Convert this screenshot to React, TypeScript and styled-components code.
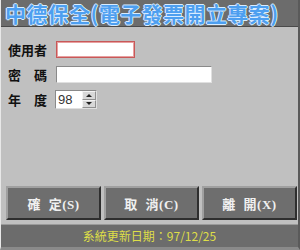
import styled, { createGlobalStyle } from "styled-components";

const GlobalStyle = createGlobalStyle`
  html, body {
    margin: 0;
    padding: 0;
    background: #c0c0c0;
  }
`;

const Frame = styled.div`
  display: flex;
  flex-direction: column;

  width: 300px;
  height: 250px;
  box-sizing: border-box;

  background: #c0c0c0;
  border-left: 1px solid #e8e8e8;
  border-right: 2px solid #5a5a5a;
  border-bottom: 3px solid #8a8a8a;

  font-family: "Liberation Serif", "Noto Sans CJK TC", serif;
  overflow: hidden;
`;

const TitleBar = styled.div`
  display: flex;
  align-items: center;

  height: 27px;
  box-sizing: border-box;
  padding-left: 4px;

  background: #6c6c6c;
  border-bottom: 1px solid #4a4a4a;
`;

const Title = styled.h1`
  margin: 0;

  font-family: "Noto Sans CJK TC", sans-serif;
  font-size: 21px;
  font-weight: 700;
  line-height: 1;
  letter-spacing: 0.4px;
  white-space: nowrap;

  color: #4d9ff0;
  text-shadow:
    1px 0 0 #d8ecff,
    -1px 0 0 #d8ecff,
    0 1px 0 #d8ecff,
    0 -1px 0 #d8ecff;
`;

const Form = styled.div`
  display: flex;
  flex-direction: column;

  gap: 8px;
  padding: 14px 0 0 7px;
`;

const Row = styled.div`
  display: flex;
  align-items: center;

  gap: 9px;
  height: 17px;
`;

const Label = styled.label`
  display: flex;
  justify-content: space-between;

  width: 39px;

  font-family: "Noto Sans CJK TC", sans-serif;
  font-size: 13px;
  font-weight: 700;
  color: #111;
`;

const Input = styled.input<{ $width: number; $focus?: boolean }>`
  width: ${(p) => p.$width}px;
  height: 17px;
  box-sizing: border-box;
  padding: 0 2px;

  background: #ffffff;
  border: 1px solid ${(p) => (p.$focus ? "#c85858" : "#8a8a8a")};
  border-right-color: ${(p) => (p.$focus ? "#c85858" : "#e0e0e0")};
  border-bottom-color: ${(p) => (p.$focus ? "#c85858" : "#e0e0e0")};
  outline: ${(p) => (p.$focus ? "1px solid #e8a0a0" : "none")};
  outline-offset: -2px;
`;

const Spinner = styled.div`
  display: flex;
  align-items: stretch;

  width: 42px;
  height: 19px;
  box-sizing: border-box;
  margin-left: -1px;

  background: #ffffff;
  border: 1px solid #8a8a8a;
  border-right-color: #e0e0e0;
  border-bottom-color: #e0e0e0;
`;

const SpinValue = styled.span`
  flex: 1;
  padding-left: 2px;

  font-family: "Liberation Sans", sans-serif;
  font-size: 13px;
  line-height: 17px;
  color: #333;
`;

const SpinArrows = styled.div`
  display: flex;
  flex-direction: column;

  width: 14px;
`;

const Arrow = styled.div<{ $down?: boolean }>`
  flex: 1;
  display: flex;
  align-items: center;
  justify-content: center;

  background: #d8d8d8;
  border: 1px solid #f4f4f4;
  border-right-color: #909090;
  border-bottom-color: #909090;

  &::after {
    content: "";
    border-left: 3px solid transparent;
    border-right: 3px solid transparent;
    ${(p) =>
      p.$down ? "border-top: 3px solid #222;" : "border-bottom: 3px solid #222;"}
  }
`;

const Spacer = styled.div`
  flex: 1;
`;

const ButtonRow = styled.div`
  display: grid;
  grid-template-columns: repeat(3, 1fr);

  gap: 3px;
  padding: 0 1px 0 5px;
  margin-bottom: 4px;
`;

const Button = styled.button`
  height: 34px;
  box-sizing: border-box;

  background: #6e6e6e;
  border: 2px solid;
  border-color: #a0a0a0 #2e2e2e #2e2e2e #a0a0a0;

  font-family: "Liberation Serif", "Noto Sans CJK TC", serif;
  font-size: 13px;
  font-weight: 700;
  letter-spacing: 0.5px;
  color: #f0f0f0;
  word-spacing: 4px;

  cursor: pointer;
`;

const Footer = styled.div`
  height: 22px;

  background: #6c6c6c;
  border-top: 1px solid #9a9a9a;

  text-align: center;
  font-family: "Noto Sans CJK TC", sans-serif;
  font-size: 12px;
  line-height: 21px;
  color: #dede48;
`;

export default function App() {
  return (
    <>
      <GlobalStyle />
      <Frame>
        <TitleBar>
          <Title>中德保全(電子發票開立專案)</Title>
        </TitleBar>
        <Form>
          <Row>
            <Label>使用者</Label>
            <Input $width={79} $focus />
          </Row>
          <Row>
            <Label>
              <span>密</span>
              <span>碼</span>
            </Label>
            <Input $width={156} />
          </Row>
          <Row>
            <Label>
              <span>年</span>
              <span>度</span>
            </Label>
            <Spinner>
              <SpinValue>98</SpinValue>
              <SpinArrows>
                <Arrow />
                <Arrow $down />
              </SpinArrows>
            </Spinner>
          </Row>
        </Form>
        <Spacer />
        <ButtonRow>
          <Button>確 定(S)</Button>
          <Button>取 消(C)</Button>
          <Button>離 開(X)</Button>
        </ButtonRow>
        <Footer>系統更新日期：97/12/25</Footer>
      </Frame>
    </>
  );
}
